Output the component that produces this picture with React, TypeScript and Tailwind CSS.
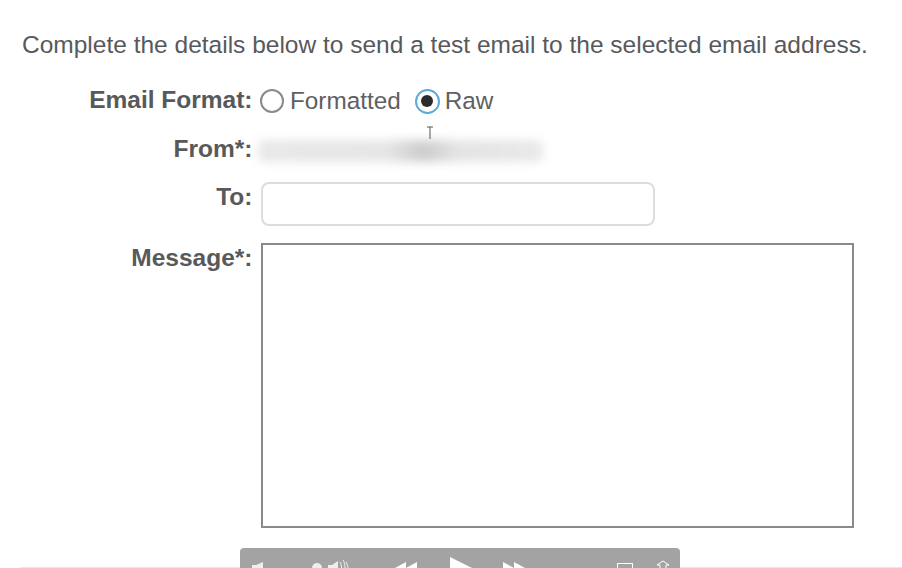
import React from "react";

function Row({ label, className, children }: { label: string; className?: string; children: React.ReactNode }) {
  return (
    <div className={"flex " + (className || "")}>
      <div className="w-[252.5px] shrink-0 text-right text-[24.5px] leading-[28px] font-bold text-[#58595b]">{label}</div>
      {children}
    </div>
  );
}

function PlayerBar() {
  return (
    <div className="absolute left-[240px] top-[548px] h-[40px] w-[440px] rounded-t-[4px] bg-[#a3a3a3]">
      <svg width="440" height="20" viewBox="0 0 440 20" fill="none">
        <path d="M12 17h4l7-3v6h-11z" fill="#eeeeee" />
        <circle cx="77" cy="20" r="5" fill="#eeeeee" />
        <path d="M88 17h4l6-4v7h-10z" fill="#eeeeee" />
        <path d="M100 14c1 1.500 1.500 3 1.500 6M103 12c1.500 2 2 5 2 8M106 14c1 2 2 4 2 6" stroke="#eeeeee" strokeWidth="1" />
        <path d="M155 20l11-6v6zM166 20l11-6v6z" fill="#ffffff" />
        <path d="M210 9l22 11h-22z" fill="#ffffff" />
        <path d="M263 14l11 6h-11zM274 14l11 6h-11z" fill="#ffffff" />
        <rect x="377.500" y="15.500" width="15" height="8" stroke="#ffffff" />
        <path d="M420 20v-3h-3l6-4 6 4h-3v3" stroke="#ffffff" />
      </svg>
    </div>
  );
}

export default function App() {
  return (
    <div className="relative h-[568px] w-[902px] overflow-hidden bg-white font-['Liberation_Sans',Arial,sans-serif]">
      <div className="pt-[30px] pl-[22px] text-[24.5px] leading-[30px] text-[#58595b]">
        Complete the details below to send a test email to the selected email address.
      </div>

      <Row label="Email Format:" className="mt-[22px] h-[36px] items-center">
        <div className="ml-[7.5px] flex items-center pt-[2px] text-[24.3px] leading-[28px] text-[#5f6062]">
          <span className="h-[24px] w-[24px] rounded-full border-2 border-[#8a8a8a] bg-white" />
          <span className="ml-[6px]">Formatted</span>
          <span className="ml-[14px] flex h-[25px] w-[25px] items-center justify-center rounded-full border-2 border-[#5aa9dc] bg-white">
            <span className="h-[12px] w-[12px] rounded-full bg-[#2b2b2b]" />
          </span>
          <span className="ml-[5px]">Raw</span>
        </div>
      </Row>

      <Row label="From*:" className="mt-[16px] h-[30px] items-center">
        <div className="ml-[5px] mt-[4px] h-[22px] w-[285px] rounded-[6px] bg-[linear-gradient(90deg,#e8e8e8_0%,#e6e6e6_45%,#cccccc_58%,#e4e4e4_70%,#e9e9e9_100%)] blur-[5px]" />
      </Row>

      <Row label="To:" className="mt-[19px]">
        <div className="ml-[8.500px] -mt-[1px] h-[44px] w-[394px] rounded-[8px] border-2 border-[#dcdcdc] bg-white" />
      </Row>

      <Row label="Message*:" className="mt-[18px]">
        <div className="ml-[8.500px] mt-[-1px] h-[285px] w-[593px] border-2 border-[#8a8a8a] bg-white" />
      </Row>

      <div className="absolute left-[20px] right-0 top-[567px] h-px bg-[#e8e8e8]" />
      <PlayerBar />

      {/* text cursor */}
      <svg className="absolute left-[425px] top-[126px]" width="10" height="14" viewBox="0 0 10 14" fill="none">
        <path d="M2 1h6M5 1v12" stroke="#555555" strokeWidth="1" />
      </svg>
    </div>
  );
}
